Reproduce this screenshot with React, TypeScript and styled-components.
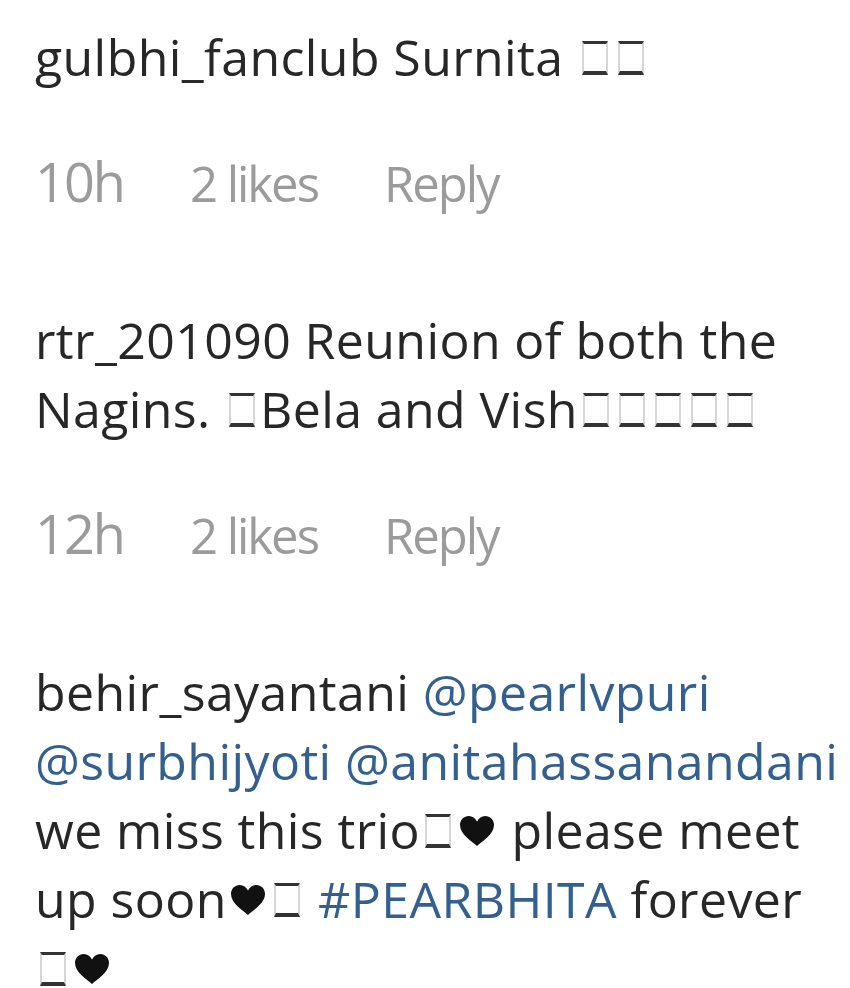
import { createGlobalStyle, styled } from "styled-components";

const Global = createGlobalStyle`
    html, body {
        margin: 0;
        padding: 0;
        background: #ffffff;
    }
`

const Page = styled.div`
    width: 850px;
    height: 988px;
    overflow: hidden;
    box-sizing: border-box;
    padding: 23px 0 0 35px;
    font-family: "Open Sans", "Noto Sans", sans-serif;
    color: #272727;
`

const CommentList = styled.ul`
    list-style: none;
    margin: 0;
    padding: 0;
    display: flex;
    flex-direction: column;
    gap: 93px;
`

const CommentItem = styled.li`
    display: flex;
    flex-direction: column;
    gap: 59px;
`

const Body = styled.p`
    margin: 0;
    font-size: 50px;
    line-height: 69px;
    letter-spacing: 0.4px;
`

const User = styled.span`
    color: #272727;
`

const Mention = styled.span`
    color: #33608f;
`

// emoji that the screenshot shows as missing-glyph boxes and hearts
const EmojiRun = styled.span`
    white-space: nowrap;
`

const Tofu = styled.span`
    display: inline-block;
    width: 26px;
    height: 34px;
    margin: 0 5px;
    box-sizing: border-box;
    border-top: 3px solid #333;
    border-bottom: 4px solid #333;
    border-left: 2px solid #d6d6d6;
    border-right: 2px solid #d6d6d6;
    vertical-align: 1px;
`

const Heart = styled.svg`
    display: inline-block;
    width: 38px;
    height: 32px;
    margin: 0 2px;
    vertical-align: 2px;
`

const Meta = styled.div`
    display: flex;
    align-items: baseline;
    gap: 66px;
    height: 62px;
    font-size: 49px;
    line-height: 60px;
    color: #9b9b9b;
`

const MetaItem = styled.span<{ $big?: boolean }>`
    display: inline-block;
    font-size: ${(p) => (p.$big ? "54px" : "49px")};
    letter-spacing: -2px;
`

const ReplyButton = styled.button`
    border: 0;
    background: none;
    padding: 0;
    font: inherit;
    color: inherit;
    letter-spacing: -2px;
    cursor: pointer;
`

type Part = { kind: "text" | "mention" | "emoji"; value: string }

type Comment = {
    user: string
    parts: Part[]
    time?: string
    likes?: number
}

// in "emoji" parts: t = box, h = heart
const comments: Comment[] = [
    {
        user: "gulbhi_fanclub",
        parts: [{ kind: "text", value: " Surnita " }, { kind: "emoji", value: "tt" }],
        time: "10h",
        likes: 2,
    },
    {
        user: "rtr_201090",
        parts: [
            { kind: "text", value: " Reunion of both the Nagins. " },
            { kind: "emoji", value: "t" },
            { kind: "text", value: "Bela and Vish" },
            { kind: "emoji", value: "ttttt" },
        ],
        time: "12h",
        likes: 2,
    },
    {
        user: "behir_sayantani",
        parts: [
            { kind: "text", value: " " },
            { kind: "mention", value: "@pearlvpuri" },
            { kind: "text", value: " " },
            { kind: "mention", value: "@surbhijyoti" },
            { kind: "text", value: " " },
            { kind: "mention", value: "@anitahassanandani" },
            { kind: "text", value: " we miss this trio" },
            { kind: "emoji", value: "th" },
            { kind: "text", value: " please meet up soon" },
            { kind: "emoji", value: "ht" },
            { kind: "text", value: " " },
            { kind: "mention", value: "#PEARBHITA" },
            { kind: "text", value: " forever " },
            { kind: "emoji", value: "th" },
        ],
    },
]

function HeartIcon() {
    return (
        <Heart viewBox="0 0 38 32" aria-hidden="true">
            <path d="M19 31 C14.5 26.5 2 19.5 2 10 C2 4.8 6 1 10.8 1 C14.4 1 17.2 3.2 19 6.4 C20.8 3.2 23.6 1 27.2 1 C32 1 36 4.8 36 10 C36 19.5 23.5 26.5 19 31 Z" fill="#111" />
        </Heart>
    )
}

function renderPart(p: Part, i: number) {
    if (p.kind === "mention") return <Mention key={i}>{p.value}</Mention>
    if (p.kind === "emoji")
        return (
            <EmojiRun key={i}>
                {p.value.split("").map((ch, j) => (ch === "h" ? <HeartIcon key={j} /> : <Tofu key={j} />))}
            </EmojiRun>
        )
    return <span key={i}>{p.value}</span>
}

export default function App() {
    return (
        <>
            <Global />
            <Page>
                <CommentList>
                    {comments.map((c) => (
                        <CommentItem key={c.user}>
                            <Body>
                                <User>{c.user}</User>
                                {c.parts.map(renderPart)}
                            </Body>
                            {c.time && (
                                <Meta>
                                    <MetaItem $big>{c.time}</MetaItem>
                                    <MetaItem>{c.likes} likes</MetaItem>
                                    <ReplyButton>Reply</ReplyButton>
                                </Meta>
                            )}
                        </CommentItem>
                    ))}
                </CommentList>
            </Page>
        </>
    )
}
